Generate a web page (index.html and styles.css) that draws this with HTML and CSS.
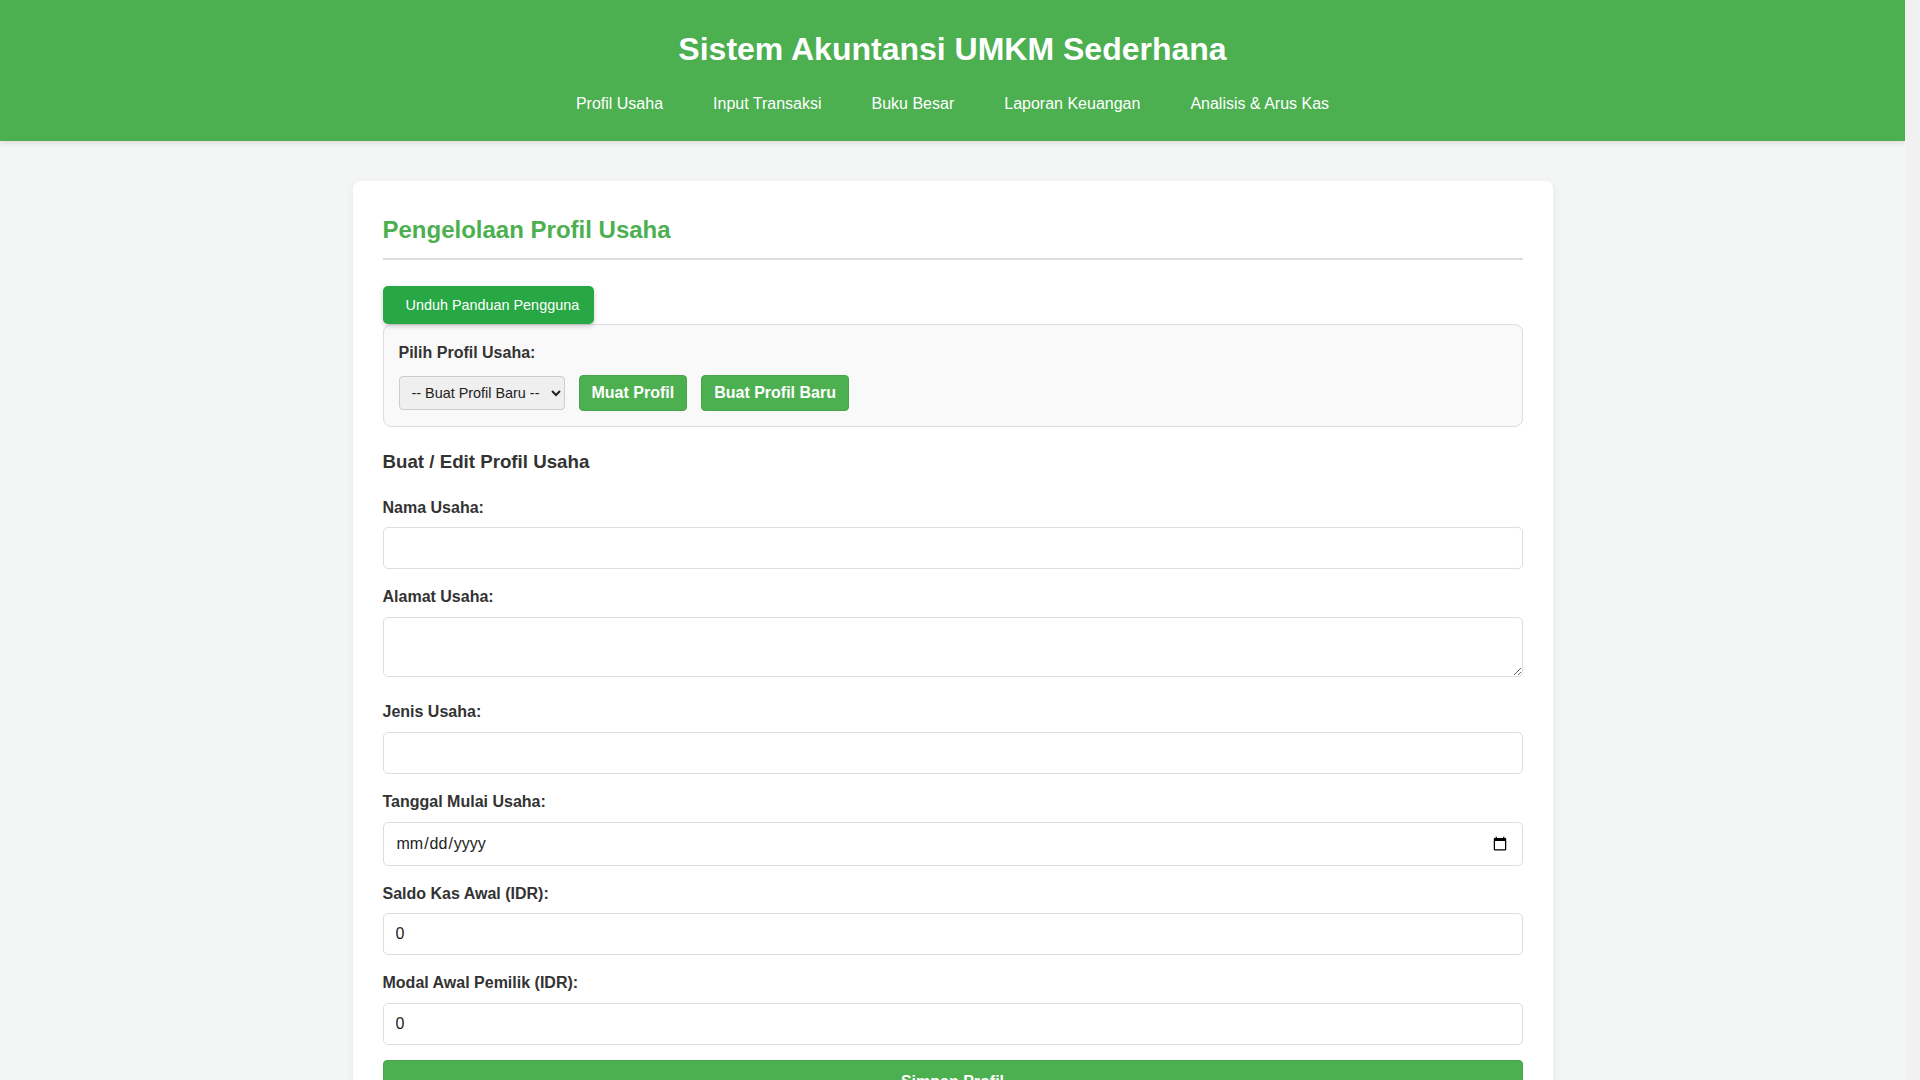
FILE: index.html
```html
<!DOCTYPE html>
<html lang="id">
<head>
    <meta charset="UTF-8">
    <meta name="viewport" content="width=device-width, initial-scale=1.0">
    <title>Sistem Akuntansi UMKM Sederhana</title>
    <link rel="stylesheet" href="styles.css">
</head>
<body>

<header>
    <h1>Sistem Akuntansi UMKM Sederhana</h1>
    <nav>
        <a href="#profil">Profil Usaha</a>
        <a href="#transaksi">Input Transaksi</a>
        <a href="#buku-besar">Buku Besar</a>
        <a href="#laporan">Laporan Keuangan</a>
        <a href="#analisis">Analisis &amp; Arus Kas</a>
    </nav>
</header>

<div class="container">
    <section class="card" id="profil">
        <h2>Pengelolaan Profil Usaha</h2>

        <div class="download-row">
            <a href="#" class="btn-download"><i class="icon-download"></i>Unduh Panduan Pengguna</a>
        </div>

        <!-- pilih profil yang tersimpan -->
        <div class="profile-select">
            <label for="profileList">Pilih Profil Usaha:</label>
            <div class="profile-actions">
                <select id="profileList">
                    <option value="">-- Buat Profil Baru --</option>
                </select>
                <button class="btn">Muat Profil</button>
                <button class="btn">Buat Profil Baru</button>
            </div>
        </div>

        <h3>Buat / Edit Profil Usaha</h3>

        <form>
            <div class="form-group">
                <label for="namaUsaha">Nama Usaha:</label>
                <input type="text" id="namaUsaha">
            </div>
            <div class="form-group">
                <label for="alamatUsaha">Alamat Usaha:</label>
                <textarea id="alamatUsaha" rows="2"></textarea>
            </div>
            <div class="form-group">
                <label for="jenisUsaha">Jenis Usaha:</label>
                <input type="text" id="jenisUsaha">
            </div>
            <div class="form-group">
                <label for="tanggalMulai">Tanggal Mulai Usaha:</label>
                <input type="date" id="tanggalMulai">
            </div>
            <div class="form-group">
                <label for="saldoKas">Saldo Kas Awal (IDR):</label>
                <input type="number" id="saldoKas" value="0">
            </div>
            <div class="form-group">
                <label for="modalAwal">Modal Awal Pemilik (IDR):</label>
                <input type="number" id="modalAwal" value="0">
            </div>
            <button type="submit" class="btn btn-block">Simpan Profil</button>
        </form>
    </section>
</div>

</body>
</html>
```

FILE: styles.css
```css
html {
    background-color: #f1f1f1;
    padding-right: 15px;
}

body {
    margin: 0;
    background-color: #f4f6f6;
    color: #333;
    font-family: "Liberation Sans", Arial, sans-serif;
    line-height: 1.6;
}

/* header & navigasi */
header {
    background-color: #4CAF50;
    color: #fff;
    text-align: center;
    padding: 24px 0 14px;
    box-shadow: 0 2px 5px rgba(0, 0, 0, 0.1);
}

header h1 {
    margin: 0 0 6px;
    font-size: 32px;
}

nav {
    display: flex;
    justify-content: center;
    gap: 50px;
}

nav a {
    color: #fff;
    text-decoration: none;
    font-size: 16px;
    padding: 10px 0;
}

nav a:hover {
    text-decoration: underline;
}

.container {
    max-width: 1200px;
    margin: 40px auto;
}

.card {
    background-color: #fff;
    padding: 30px;
    border-radius: 8px;
    box-shadow: 0 2px 10px rgba(0, 0, 0, 0.06);
}

.card h2 {
    color: #4CAF50;
    font-size: 24px;
    margin: 0 0 26px;
    padding-bottom: 9px;
    border-bottom: 2px solid #ddd;
}

.card h3 {
    font-size: 18.72px;
    margin: 20px 0 18px;
}

/* tombol unduh panduan */
.download-row {
    display: flex;
}

.btn-download {
    background-color: #28a745;
    color: #fff;
    text-decoration: none;
    font-size: 14.4px;
    line-height: normal;
    padding: 11px 15px;
    border-radius: 5px;
    box-shadow: 0 2px 5px rgba(0, 0, 0, 0.2);
}

.icon-download {
    margin-right: 8px;
}

/* pilih profil */
.profile-select {
    background-color: #f9f9f9;
    border: 1px solid #ddd;
    border-radius: 8px;
    padding: 15px;
}

.profile-select label {
    display: block;
    font-weight: bold;
    margin-bottom: 9px;
}

.profile-actions {
    display: flex;
    align-items: center;
    gap: 14px;
}

.profile-actions select {
    font-family: "Liberation Sans", Arial, sans-serif;
    font-size: 14.4px;
    padding: 7px 8px;
    background-color: #efefef;
    border: 1px solid #ccc;
    border-radius: 4px;
    color: #222;
}

.btn {
    background-color: #4CAF50;
    color: #fff;
    border: 1px solid #47a64b;
    border-radius: 4px;
    padding: 8px 12px;
    font-family: "Liberation Sans", Arial, sans-serif;
    font-size: 16px;
    font-weight: bold;
    cursor: pointer;
}

.btn:hover {
    background-color: #45a049;
}

.btn-block {
    display: block;
    width: 100%;
    padding: 12px;
}

/* form */
.form-group {
    margin-bottom: 15px;
}

.form-group label {
    display: block;
    font-weight: bold;
    margin-bottom: 7px;
}

.form-group input,
.form-group textarea {
    width: 100%;
    box-sizing: border-box;
    padding: 11px 12px;
    border: 1px solid #ddd;
    border-radius: 5px;
    font-family: "Liberation Sans", Arial, sans-serif;
    font-size: 16px;
    color: #222;
    background-color: #fff;
}
```
